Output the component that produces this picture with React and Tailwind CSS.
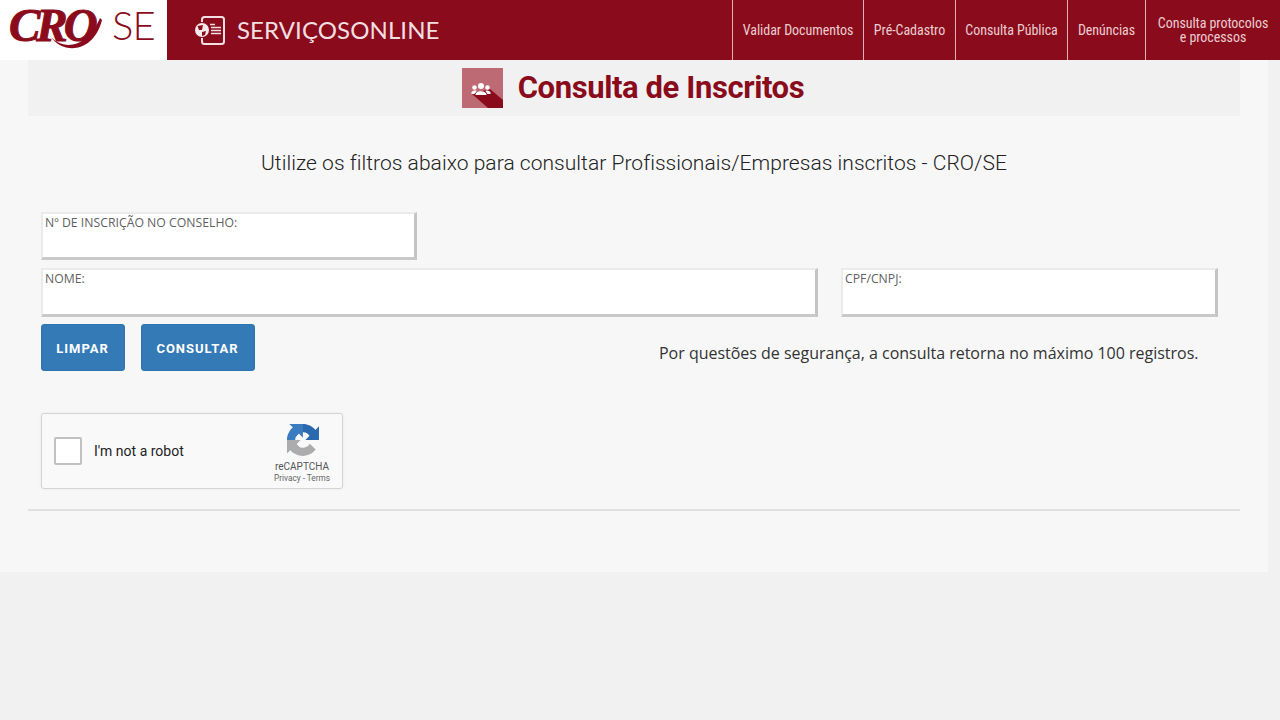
import React from 'react';

const navItems = [
  { label: 'Validar Documentos', width: 'w-[131px]' },
  { label: 'Pré-Cadastro', width: 'w-[92px]' },
  { label: 'Consulta Pública', width: 'w-[112px]' },
  { label: 'Denúncias', width: 'w-[78px]' },
];

const Logo = () => (
  <div className="w-[167px] h-[60px] bg-white flex items-center shrink-0 relative">
    <span className="ml-[9px] -mt-[10px] font-['Liberation_Serif',serif] font-bold italic text-[47px] leading-[56px] tracking-[-4px] text-[#8a0c1c] [-webkit-text-stroke:1px_#8a0c1c]">
      CRO
    </span>
    <svg className="absolute left-[48px] top-[14px]" width="58" height="38" viewBox="0 0 58 38" fill="none">
      <path d="M2 22 C14 36 38 36 52 4 L54 6 C46 38 16 42 2 22 Z" fill="#8a0c1c" />
    </svg>
    <span className="absolute left-[112px] top-[0px] font-['Lato',sans-serif] font-light text-[40px] leading-[50px] tracking-[-1px] text-[#8a0c1c]">
      SE
    </span>
  </div>
);

const ServicesIcon = () => (
  <svg width="32" height="32" viewBox="0 0 32 32" fill="none">
    <rect x="8" y="3" width="22" height="27" rx="2.5" stroke="#f3dfe1" strokeWidth="2" />
    <circle cx="8" cy="16" r="8" fill="#8a0c1c" />
    <circle cx="8" cy="16" r="7" fill="#f6e9ea" />
    <path d="M3.5 12 L9 11 L8 16 L5 16 Z M8 18 L12 17 L11 21 L8 22 Z" fill="#8a0c1c" />
    <path d="M16 10.5 H21 M17 13.5 H27 M17 16.5 H27 M17 19.5 H27" stroke="#f3dfe1" strokeWidth="1.3" />
  </svg>
);

const Header = () => (
  <header className="h-[60px] bg-[#8a0c1c] flex">
    <Logo />
    <div className="flex items-center pl-[27px] flex-1 gap-[11px]">
      <ServicesIcon />
      <span className="font-['Lato',sans-serif] text-[24px] leading-none text-[#f3dfe1] tracking-[0.1px]">SERVIÇOSONLINE</span>
    </div>
    <nav className="flex">
      {navItems.map((item) => (
        <a
          key={item.label}
          className={`${item.width} h-[60px] border-l border-[#e0b3b8] flex items-center justify-center`}
        >
          <span className="font-['Roboto',sans-serif] text-[14px] text-[#eccdd1] whitespace-nowrap [font-stretch:75%] tracking-[-0.05px]">
            {item.label}
          </span>
        </a>
      ))}
      <a className="w-[135px] h-[60px] border-l border-[#e0b3b8] flex items-center justify-center text-center">
        <span className="font-['Roboto',sans-serif] text-[14px] leading-[14px] text-[#eccdd1] whitespace-nowrap [font-stretch:75%] tracking-[-0.05px]">
          Consulta protocolos
          <br />
          e processos
        </span>
      </a>
    </nav>
  </header>
);

const TitleIcon = () => (
  <svg width="41" height="40" viewBox="0 0 41 40">
    <rect width="41" height="40" fill="#bd6a75" />
    <path d="M10 26 L28 21 L41 32 L41 40 L26 40 Z" fill="#8a0c1c" />
    <g transform="translate(-1.5 1)">
      <circle cx="20.5" cy="17" r="3" fill="#fff" />
      <path d="M15 26 C15 21 26 21 26 26 Z" fill="#fff" />
      <circle cx="14" cy="18.5" r="2.3" fill="#fff" />
      <path d="M11 25 C10 21.5 16 21 16 22 L14 25 Z" fill="#fff" />
      <circle cx="27" cy="18.5" r="2.3" fill="#fff" />
      <path d="M30 25 C31 21.5 25 21 25 22 L27 25 Z" fill="#fff" />
    </g>
  </svg>
);

const Field = ({ label, className }) => (
  <div className={`${className} bg-white border-t-2 border-l-2 border-r-[3px] border-b-[3px] border-t-[#ebebeb] border-l-[#ebebeb] border-r-[#c4c4c4] border-b-[#c9c9c9] pl-[2px]`}>
    <label className="block font-['Open_Sans',sans-serif] font-medium text-[12.25px] leading-[16px] mt-[1px] text-[#5f5f5f] whitespace-nowrap">{label}</label>
  </div>
);

const ActionButton = ({ children, className }) => (
  <button className={`${className} h-[47px] bg-[#337ab7] rounded-[3px] border border-[#3074ae] pt-[2px] pr-[1px] font-['Roboto',sans-serif] font-bold text-[13px] tracking-[1px] text-white`}>
    {children}
  </button>
);

const RecaptchaLogo = () => (
  <svg className="ml-[2px]" width="32" height="32" viewBox="0 0 64 64">
    <path d="M64 31.955l-.033-1.37V4.687l-7.16 7.16C50.948 4.674 42.033.093 32.05.093c-10.4 0-19.622 4.96-25.458 12.64l11.736 11.86a15.55 15.55 0 0 1 4.754-5.334c2.05-1.6 4.952-2.906 8.968-2.906.485 0 .86.057 1.135.163 4.976.393 9.288 3.14 11.828 7.124l-8.307 8.307L64 31.953" fill="#2a69ad" />
    <path d="M31.862 0l-1.37.033H4.594l7.16 7.16C4.58 13.052 0 21.967 0 31.95c0 10.4 4.96 19.622 12.64 25.458L24.5 45.67a15.55 15.55 0 0 1-5.334-4.754c-1.6-2.05-2.906-4.952-2.906-8.968 0-.485.057-.86.163-1.135.393-4.976 3.14-9.288 7.124-11.828l8.307 8.307L31.86 0" fill="#3a7cc0" />
    <path d="M0 31.95l.033 1.37v25.898l7.16-7.16c5.86 7.173 14.774 11.754 24.76 11.754 10.4 0 19.622-4.96 25.458-12.64l-11.736-11.86a15.55 15.55 0 0 1-4.754 5.334c-2.05 1.6-4.952 2.906-8.968 2.906-.485 0-.86-.057-1.135-.163-4.976-.393-9.288-3.14-11.828-7.124l8.307-8.307L0 31.952" fill="#acacac" />
  </svg>
);

const Recaptcha = () => (
  <div className="w-[302px] h-[76px] bg-[#f9f9f9] border border-[#d3d3d3] rounded-[3px] flex items-center shadow-[0_0_3px_rgba(0,0,0,0.06)]">
    <div className="w-[28px] h-[28px] ml-[12px] bg-white border-2 border-[#c1c1c1] rounded-[2px]" />
    <span className="ml-[12px] font-['Roboto',sans-serif] text-[14px] text-[#222] flex-1">I'm not a robot</span>
    <div className="w-[70px] flex flex-col items-center pt-[6px] mr-[5px]">
      <RecaptchaLogo />
      <span className="font-['Roboto',sans-serif] text-[10px] leading-[12px] mt-[5px] text-[#555]">reCAPTCHA</span>
      <span className="font-['Roboto',sans-serif] text-[8.25px] leading-[11px] text-[#666] whitespace-nowrap">Privacy - Terms</span>
    </div>
  </div>
);

export default function App() {
  return (
    <div className="min-h-[720px] bg-[#f1f1f1] overflow-hidden">
      <Header />
      <main className="w-[1268px] h-[512px] bg-[#f7f7f7] px-[28px]">
        <div className="h-[56px] w-[1212px] bg-[#f1f1f1] flex items-center justify-center gap-[15px] pr-[2px]">
          <TitleIcon />
          <h1 className="-mt-[2px] font-['Roboto',sans-serif] font-bold text-[31px] leading-none text-[#8a0c1c] tracking-[-0.4px]">Consulta de Inscritos</h1>
        </div>
        <p className="mt-[34px] text-center font-['Roboto',sans-serif] font-light text-[21px] leading-[26px] text-[#222] tracking-[0.04px]">
          Utilize os filtros abaixo para consultar Profissionais/Empresas inscritos - CRO/SE
        </p>
        <form className="mt-[36px] ml-[13px] w-[1177px]">
          <Field label="Nº DE INSCRIÇÃO NO CONSELHO:" className="w-[376px] h-[48px]" />
          <div className="flex gap-[23px] mt-[8px]">
            <Field label="NOME:" className="w-[777px] h-[49px]" />
            <Field label="CPF/CNPJ:" className="w-[377px] h-[49px]" />
          </div>
          <div className="flex mt-[7px] items-start">
            <ActionButton className="w-[84px]">LIMPAR</ActionButton>
            <ActionButton className="w-[114px] ml-[16px]">CONSULTAR</ActionButton>
            <p className="ml-[404px] mt-[18px] font-['Open_Sans',sans-serif] text-[16px] leading-[22px] text-[#333] whitespace-nowrap tracking-[-0.015px]">
              Por questões de segurança, a consulta retorna no máximo 100 registros.
            </p>
          </div>
          <div className="mt-[42px]">
            <Recaptcha />
          </div>
        </form>
        <hr className="mt-[20px] w-[1212px] border-0 border-t-2 border-[#e0e0e0]" />
      </main>
    </div>
  );
}
